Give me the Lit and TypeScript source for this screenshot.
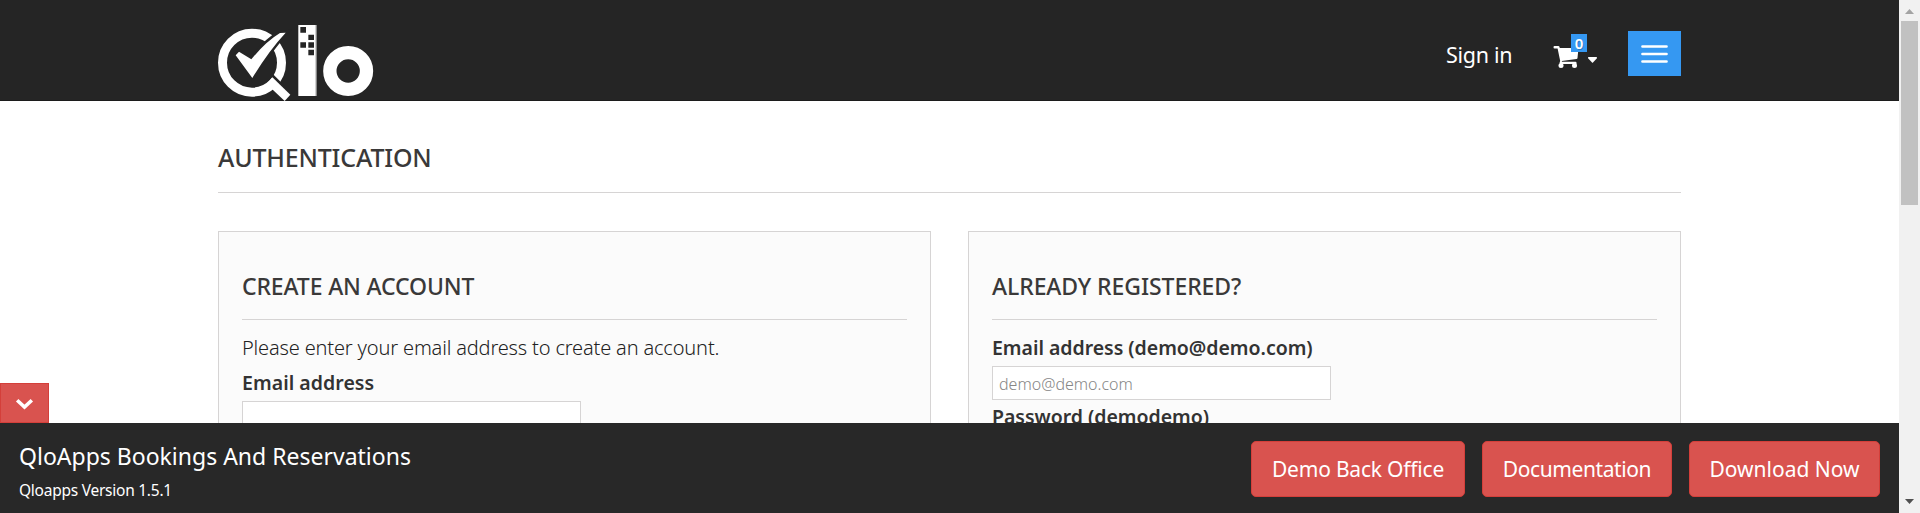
import { LitElement, html, css } from "lit";
import { customElement } from "lit/decorators.js";

@customElement("site-header")
class SiteHeader extends LitElement {
  static styles = css`
    :host { display: block; height: 101px; background: #252525; color: #fff; box-sizing: border-box; border-bottom: 1px solid #1c1c1c; }
    .inner { width: 1463px; margin: 0 auto; height: 100px; display: flex; align-items: flex-start; }
    svg { display: block; }
    .logo { margin-top: 25px; width: 156px; height: 76px; }
    .nav { margin-left: auto; display: flex; align-items: flex-start; }
    .signin { margin-top: 39px; margin-right: 41px; line-height: 32px; font-size: 21.5px; letter-spacing: -0.3px; width: 66px; white-space: nowrap; }
    .cart { position: relative; margin-top: 46px; display: flex; width: 44px; margin-right: 31px; }
    .caret { margin: 11px 0 0 9px; }
    .badge { position: absolute; left: 18px; top: -12px; width: 16px; height: 18px; background: #3598f2; font-size: 15px; font-weight: 600; line-height: 18px; text-align: center; text-shadow: 1px 1px rgba(0,0,0,.2); }
    .menu { margin-top: 31px; width: 53px; height: 45px; background: #3598f2; }
  `;
  render() {
    return html`<div class="inner">
      <svg class="logo" viewBox="54 45 468 228">
        <circle cx="156" cy="158" r="88.5" fill="none" stroke="#fff" stroke-width="27"/>
        <path d="M107 136L117 125L154 148Q198 94 240 69L257 68Q205 124 157 204Z" fill="#fff" stroke="#252525" stroke-width="15"/>
        <path d="M107 136L117 125L154 148Q198 94 240 69L257 68Q205 124 157 204Z" fill="#fff"/>
        <path d="M213 193L252 232" stroke="#252525" stroke-width="9"/>
        <path d="M217 202L271 254L254 273L200 222Z" fill="#fff"/>
        <path d="M294 45H349V258H294Z" fill="#fff"/>
        <path d="M295.500 45V258M347.500 45V258" stroke="#bbb" stroke-width="3"/>
        <path d="M301 51h17v17h-17zM325 74h17v16h-17zM301 97h17v16h-17zM325 97h17v16h-17zM325 119h17v17h-17z" fill="#252525"/>
        <circle cx="444.5" cy="183" r="55" fill="none" stroke="#fff" stroke-width="40"/>
      </svg>
      <div class="nav">
        <div class="signin">Sign in</div>
        <div class="cart">
          <svg width="26" height="22" viewBox="0 0 26 22" fill="#fff"><path d="M1.500 0H5.500Q6.500 0 6.800 2H24.500Q25.500 2 25.400 3L24.500 12Q24.400 13 23.500 13.100L8.800 14.900L9 15.700H22.500Q23.500 15.700 23.500 16.700V18H7.600Q6.300 18 6.600 16.500L7.200 15L4.600 2.600H1.500Q.500 2.600.500 1.300Q.500 0 1.500 0Z"/><circle cx="8" cy="19.400" r="2.500"/><circle cx="21.500" cy="19.400" r="2.500"/></svg>
          <svg class="caret" width="9" height="6" viewBox="0 0 9 6"><path d="M.5 0H8.500Q9.300.5 8.700 1.400L5 5.500Q4.500 6 4 5.500L.3 1.400Q-.3.500.500 0Z" fill="#fff"/></svg>
          <span class="badge">0</span>
        </div>
        <div class="menu"><svg width="53" height="45"><path d="M14.500 15.500H38.500M14.500 23H38.500M14.500 30.500H38.500" stroke="#fff" stroke-width="2.700" stroke-linecap="round"/></svg></div>
      </div>
    </div>`;
  }
}

@customElement("auth-forms")
class AuthForms extends LitElement {
  static styles = css`
    :host { display: block; width: 1463px; margin: 0 auto; }
    h1, h3 { margin: 0; font-weight: 500; color: #3a3939; border-bottom: 1px solid #d6d4d4; box-sizing: border-box; white-space: nowrap; }
    h1 { height: 92px; padding-top: 41px; font-size: 25px; line-height: 30px; letter-spacing: -0.19px; }
    .cols { display: grid; grid-template-columns: 1fr 1fr; gap: 36px 37px; margin-top: 38px; }
    .card { box-sizing: border-box; height: 420px; border: 1px solid #d6d4d4; background: #fbfbfb; padding: 0 23px; }
    h3 { height: 88px; padding-top: 39px; font-size: 23px; line-height: 30px; letter-spacing: -0.08px; }
    .create { letter-spacing: -0.14px; }
    p { margin: 13px 0 0; line-height: 30px; font-size: 20px; font-weight: 300; letter-spacing: -0.16px; color: #222; white-space: nowrap; }
    label { display: block; font-size: 19.5px; font-weight: 600; line-height: 30px; color: #333; white-space: nowrap; letter-spacing: -0.03px; }
    .l1 { margin-top: 5px; letter-spacing: 0.04px; }
    .l2 { margin-top: 13px; }
    .l3 { margin-top: 2px; }
    .field { box-sizing: border-box; width: 339px; height: 34px; margin-top: 3px; border: 1px solid #d6d4d4; background: #fff; font-size: 16px; line-height: 34px; font-weight: 300; color: #868686; padding-left: 6px; }
  `;
  render() {
    return html`
      <h1>AUTHENTICATION</h1>
      <div class="cols">
        <div class="card">
          <h3 class="create">CREATE AN ACCOUNT</h3>
          <p>Please enter your email address to create an account.</p>
          <label class="l1">Email address</label>
          <div class="field"></div>
        </div>
        <div class="card">
          <h3>ALREADY REGISTERED?</h3>
          <label class="l2">Email address (demo@demo.com)</label>
          <div class="field">demo@demo.com</div>
          <label class="l3">Password (demodemo)</label>
        </div>
      </div>`;
  }
}

@customElement("demo-bar")
class DemoBar extends LitElement {
  static styles = css`
    :host { display: block; }
    .tab { width: 49px; height: 40px; box-sizing: border-box; background: #d9534f; border: 1px solid #d43f3a; }
    svg { display: block; }
    .bar { height: 90px; background: #282828; color: #fff; display: flex; padding: 0 19px; box-sizing: border-box; white-space: nowrap; }
    .name { margin-top: 17px; font-size: 23px; line-height: 32px; }
    .ver { margin-top: 8px; font-size: 15.5px; line-height: 20px; letter-spacing: -0.25px; }
    .btns { margin: 18px 0 0 auto; display: flex; gap: 17px; }
    .btn { box-sizing: border-box; height: 56px; line-height: 54px; border: 1px solid #d43f3a; border-radius: 5px; background: #d9534f; font-size: 21px; text-align: center; }
    .b1 { width: 214px; letter-spacing: -0.2px; }
    .b2 { width: 190px; letter-spacing: -0.4px; }
    .b3 { width: 191px; letter-spacing: 0; }
  `;
  render() {
    return html`
      <div class="tab"><svg width="47" height="38"><path d="M17.500 17.500L23.500 23L29.500 17.500" stroke="#fff" stroke-width="3.600" fill="none" stroke-linecap="square"/></svg></div>
      <div class="bar">
        <div><div class="name">QloApps Bookings And Reservations</div><div class="ver">Qloapps Version 1.5.1</div></div>
        <div class="btns"><div class="btn b1">Demo Back Office</div><div class="btn b2">Documentation</div><div class="btn b3">Download Now</div></div>
      </div>`;
  }
}

@customElement("app-root")
class AppRoot extends LitElement {
  static styles = css`
    :host { display: flex; position: relative; width: 1920px; height: 513px; overflow: hidden; background: #fff; font-family: "Noto Sans", "Open Sans", sans-serif; }
    .page { position: relative; width: 1899px; height: 513px; overflow: hidden; }
    demo-bar { position: absolute; left: 0; right: 0; bottom: 0; }
    .scroll { width: 21px; height: 513px; background: #f1f1f1; display: flex; flex-direction: column; justify-content: space-between; }
    .thumb { width: 17px; height: 184px; margin-left: 2px; background: #c1c1c1; }
    svg { display: block; }
  `;
  render() {
    return html`
      <div class="page"><site-header></site-header><auth-forms></auth-forms><demo-bar></demo-bar></div>
      <div class="scroll">
        <div><svg width="21" height="21"><path d="M6 14L10.500 9L15 14Z" fill="#a3a3a3"/></svg><div class="thumb"></div></div>
        <svg width="21" height="21"><path d="M6 7L10.500 12L15 7Z" fill="#505050"/></svg>
      </div>`;
  }
}
